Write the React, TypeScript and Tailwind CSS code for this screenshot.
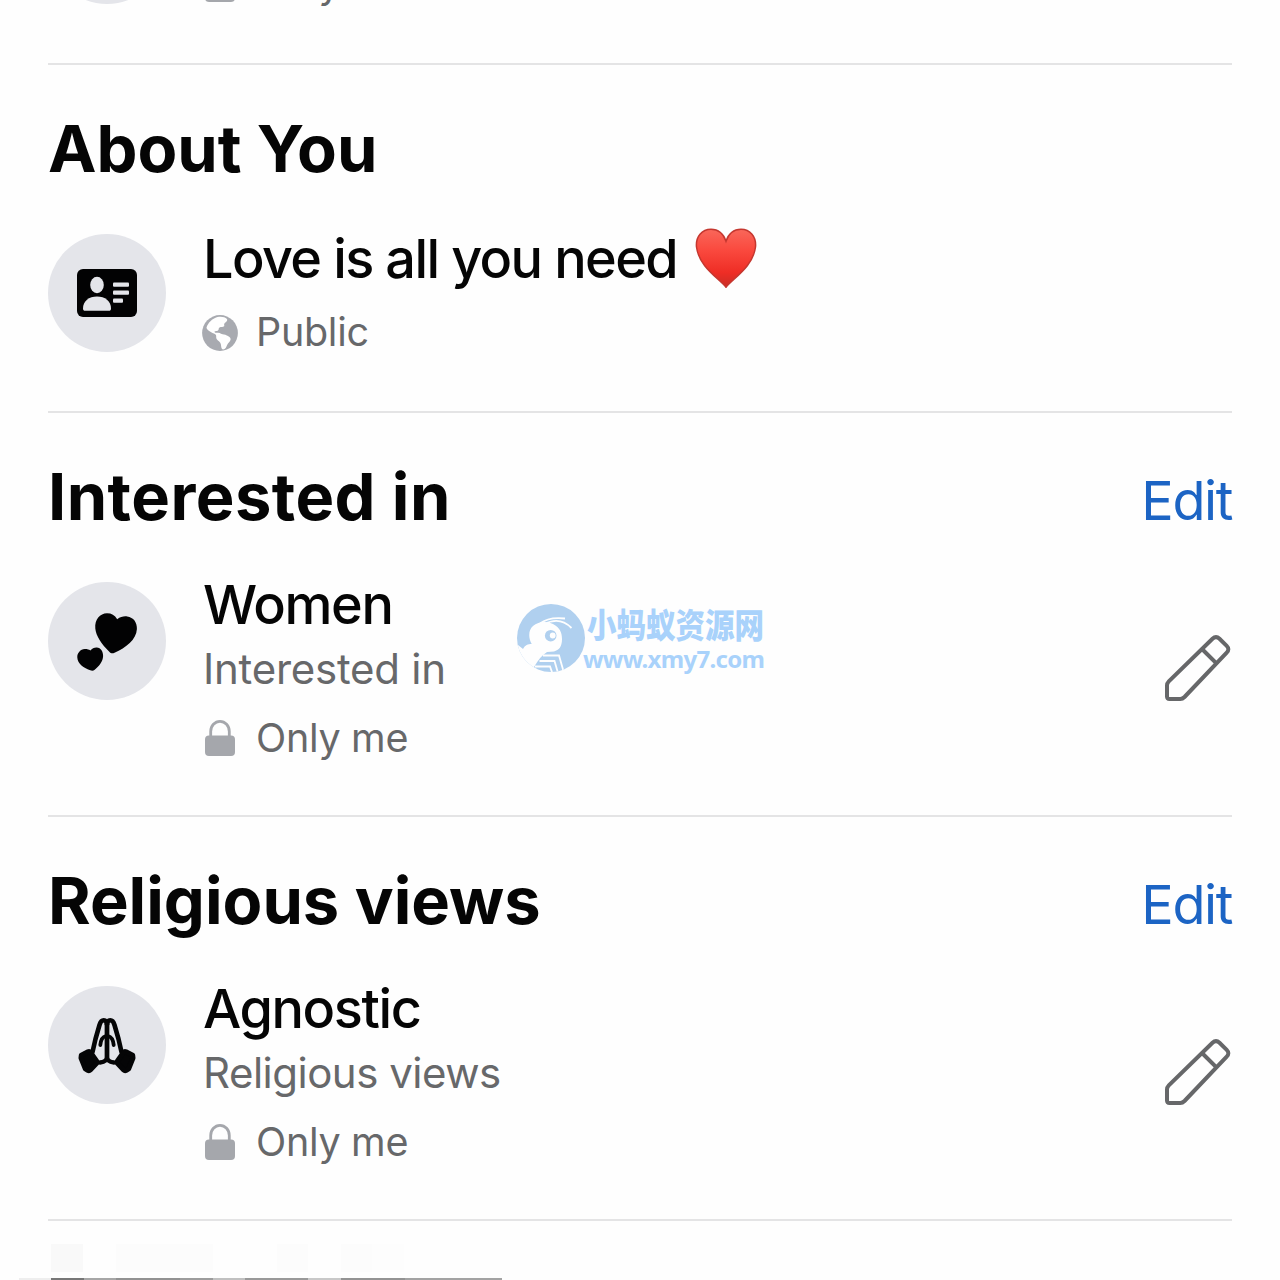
import type { ReactNode } from 'react';

function LockIcon() {
  return (
    <svg viewBox="0 0 36 40" className="w-9 h-10 shrink-0" fill="none">
      <path d="M8.7 19V13.500a9.300 10.200 0 0 1 18.600 0V19" stroke="#a5a7ac" strokeWidth="2.8" />
      <rect x="3" y="17.5" width="30" height="20.5" rx="4" fill="#a5a7ac" />
    </svg>
  );
}

function GlobeIcon() {
  return (
    <svg viewBox="0 0 36 36" className="mt-0.5 w-9 h-9 shrink-0">
      <circle cx="18" cy="18" r="17.9" fill="#a8aab0" />
      <g fill="#fff">
        <path d="M4.500 12.500C6 8 10 3.500 15.500 2c4-.8 7.500 0 9.500 2 .8 1.300-.5 2.700-2 3.700-1 .8-1 2-.6 3.400-1.500 1.600-3.500.4-4.900 1.500-1.400 1-.2 2-1.500 3-1.200.8-2.500.3-3.500 1 0 1.200 1 1.400 2.500 1.200 1.800-.3 3 .1 4 1 2.300 1 3.800.5 5.800 1.800 1.800 1 4 1.500 3.800 4-.3 2.500-2.500 3.300-3.500 5.500-.8 2-1.600 4.300-4 4.300-2 0-1.800-3-2.300-5.300-.5-2.500-3-3-4.200-5-.9-1.800.3-3.600-1.300-4.800-1.800-1.300-3.800-1.500-5.300-2.800-1.500-1.200-3.500-2-3.500-4z" />
      </g>
    </svg>
  );
}

function CardIcon() {
  return (
    <svg viewBox="0 0 60 48" className="w-[60px] h-12">
      <rect width="60" height="48" rx="6" fill="#020203" />
      <g fill="#e4e5ea">
        <ellipse cx="20" cy="16" rx="6.8" ry="8.2" />
        <path d="M6 39.5C6 32 12 27.5 20 27.5S34 32 34 39.500c0 1.600-.8 2.300-2.200 2.300H8.200C6.800 41.800 6 41.100 6 39.500z" />
        <rect x="36" y="13.5" width="16" height="4.2" rx="1" />
        <rect x="36" y="21.5" width="16" height="4.2" rx="1" />
        <rect x="36" y="29.5" width="10" height="4.2" rx="1" />
      </g>
    </svg>
  );
}

function HeartsIcon() {
  return (
    <svg viewBox="0 0 118 118" className="w-[118px] h-[118px]" fill="#020203">
      <path d="M66.500 70.800c-2 1-3.800.6-5.200-1C53.500 62 48 54 47.300 46.500 46.500 37.500 52 31.500 59 31.300c4.500 0 7.800 1.900 10.200 6 3.300-2.500 6.800-3.300 10-2.800 6.300.8 10 6 9.700 12.500-.6 11-11 18.500-22.400 23.800z" />
      <path d="M46.700 87.700c-1.300 1.200-2.800 1.300-4.400.6C35 85.700 29.700 81.500 29.300 75.500c-.3-4.500 3.200-8.300 7.400-8.500 2.300-.1 4.100.4 5.700 1.500 1.700-2 3.800-3.100 6.300-3 4.300.2 6.500 4.200 6.400 8.500-.2 5.500-3.900 10-8.400 13.700z" />
    </svg>
  );
}

function Hand() {
  return (
    <>
      <path d="M44.500 66L47.500 53l4-14c1-3.300 2.200-4.700 4.200-4.700s3.300 1.700 3.300 4.200" strokeWidth="4.6" />
      <path d="M59 37v34c0 3-2 5-7 5.500" strokeWidth="4.4" />
      <path d="M58 50c-3.500.8-5.200 3.500-5.700 9" strokeWidth="3.8" />
      <path d="M33.300 69.200L40 65.800c1-.5 1.700-.3 2.400.5L48.600 75c.6 1 .5 1.800-.2 2.600L42.300 84c-.8.8-1.600.9-2.600.3l-2.400-1.400L33 72z" fill="#050506" strokeWidth="5" />
    </>
  );
}

function PrayIcon() {
  return (
    <svg viewBox="0 0 118 118" className="w-[118px] h-[118px]" fill="none" stroke="#050506" strokeLinecap="round" strokeLinejoin="round">
      <Hand />
      <g transform="matrix(-1 0 0 1 118 0)">
        <Hand />
      </g>
    </svg>
  );
}

function PencilIcon() {
  return (
    <svg viewBox="0 0 68 68" className="w-[68px] h-[68px]" fill="none" stroke="#666769" strokeWidth="4" strokeLinejoin="round">
      <path d="M3 61.5V50.5c0-1.700.6-3 1.800-4.200L48.500 3.800c2.300-2.200 4.700-2.200 7 0l7.200 7.100c2.200 2.200 2.200 4.500 0 6.700L20.500 62c-1.200 1.200-2.500 2-4.200 2H5.500C3.700 64 3 63.200 3 61.500z" />
      <path d="M38.500 14.500l13.700 13.700" />
    </svg>
  );
}

function RedHeart() {
  return (
    <svg viewBox="0 0 62 60" className="w-[62px] h-[60px] shrink-0">
      <defs>
        <linearGradient id="heart" x1="0" y1="0" x2="0" y2="1">
          <stop offset="0" stopColor="#f9675a" />
          <stop offset="0.35" stopColor="#fa4a3f" />
          <stop offset="0.75" stopColor="#ee2d25" />
          <stop offset="1" stopColor="#c92d25" />
        </linearGradient>
      </defs>
      <path
        d="M31 59.300C25 51 4 39.500 1.500 19 .5 8.500 7 1.200 16 1.200c7.200 0 12.300 4 15 12 2.700-8 7.800-12 15-12 9 0 15.500 7.300 14.500 17.800C58 39.500 37 51 31 59.300z"
        fill="url(#heart)"
        stroke="#c5372f"
        strokeWidth="1.5"
      />
    </svg>
  );
}

function Avatar({ children }: { children?: ReactNode }) {
  return (
    <div className="mt-[5px] flex size-[118px] shrink-0 items-center justify-center rounded-full bg-[#e4e5ea]">
      {children}
    </div>
  );
}

function Privacy({ label }: { label: string }) {
  return (
    <div className="-ml-px flex h-[50px] items-center text-[39.5px] leading-[50px] tracking-[-0.3px] text-[#67686a]">
      {label === 'Public' ? <GlobeIcon /> : <LockIcon />}
      <span className="ml-[18px]">{label}</span>
    </div>
  );
}

function SectionHeader({ title, tracking, editable }: { title: string; tracking: string; editable?: boolean }) {
  return (
    <div className="flex h-[68px] items-center justify-between">
      <h2 className={`-mt-0.5 text-[65px] leading-[68px] font-bold whitespace-nowrap ${tracking}`}>{title}</h2>
      {editable && <a href="#" className="mt-1.5 text-[54px] leading-[68px] tracking-[-1.4px] text-[#1c64c4]">Edit</a>}
    </div>
  );
}

interface DetailProps {
  title: string;
  value: string;
  icon: ReactNode;
  titleTracking: string;
  valueTracking: string;
  subTracking: string;
}

function DetailSection({ title, value, icon, titleTracking, valueTracking, subTracking }: DetailProps) {
  return (
    <section className="h-[404px] border-t-2 border-[#e4e4e5] pt-[51px]">
      <SectionHeader title={title} tracking={titleTracking} editable />
      <div className="mt-[45px] flex">
        <Avatar>{icon}</Avatar>
        <div className="ml-[37px] grow">
          <p className={`text-[54px] leading-[56px] font-medium ${valueTracking}`}>{value}</p>
          <p className={`mt-[11px] text-[42px] leading-[50px] text-[#67686a] ${subTracking}`}>{title}</p>
          <div className="mt-[19px]"><Privacy label="Only me" /></div>
        </div>
        <div className="mt-[58px]"><PencilIcon /></div>
      </div>
    </section>
  );
}

function Watermark() {
  return (
    <div className="absolute top-[603px] left-[516px] flex text-[#a9d2fb]">
      <svg viewBox="0 0 70 70" className="w-[70px] h-[70px] shrink-0">
        <defs>
          <clipPath id="badge">
            <circle cx="35" cy="35" r="34" />
          </clipPath>
        </defs>
        <g clipPath="url(#badge)">
          <rect width="70" height="70" fill="#b0d0ef" />
          <path d="M0 41l2 1 5 4c2-4 5-5 8.700-5C12 34 12.500 27 17 23c5-4.500 14-5.500 20-2 7 3.500 9 9 9 15 0 8-3 11-8 12.500L31 49c-5 3-9 8-13 15l-4 6H0z" fill="#fefefe" />
          <path d="M24 20.500C31 15 40 14.500 49 15.500M28 21.500c9-5 19-5 27.500 3.500" stroke="#fefefe" strokeWidth="1.8" fill="none" />
          <path d="M27 52.500h16l5 17.500M23.500 58h15L42 70M19 63.500h15l2.500 7" stroke="#fefefe" strokeWidth="1.8" fill="none" />
          <circle cx="34.7" cy="32.7" r="5.8" fill="#b0d0ef" />
          <circle cx="36.7" cy="32.5" r="2.9" fill="#fefefe" />
        </g>
      </svg>
      <div className="-ml-[3px]">
        <p className="mt-0.5 mb-2 ml-1 h-8 origin-top scale-y-[1.15] font-['Noto_Sans_CJK_SC',sans-serif] text-[29.5px] leading-[33px] font-black whitespace-nowrap">小蚂蚁资源网</p>
        <p className="font-['Noto_Sans',sans-serif] text-[24px] leading-7 font-bold tracking-[-0.7px] whitespace-nowrap">www.xmy7.com</p>
      </div>
    </div>
  );
}

function NextSection() {
  return (
    <section className="border-t-2 border-[#e4e4e5] pt-[23px]">
      <div className="ml-[3px] flex h-7">
        <div className="w-8 bg-[#f9f9f9]" />
        <div className="ml-[33px] w-[97px] bg-[#fcfcfc]" />
        <div className="ml-16 w-[31px] bg-[#fcfcfc]" />
        <div className="ml-[33px] w-[31px] bg-[#fcfcfc]" />
        <div className="w-8 bg-[#fdfdfd]" />
      </div>
      <div className="mt-1.5 -ml-[29px] flex h-2">
        <div className="w-8 bg-[#eeeeee]" />
        <div className="w-[33px] bg-[#777777]" />
        <div className="w-8 bg-[#a6a6a6]" />
        <div className="w-16 bg-[#929292]" />
        <div className="w-[33px] bg-[#9c9c9c]" />
        <div className="w-8 bg-[#c0c0c0]" />
        <div className="w-[63px] bg-[#999999]" />
        <div className="w-[33px] bg-[#c8c8c8]" />
        <div className="w-16 bg-[#939393]" />
        <div className="w-[97px] bg-[#a3a3a3]" />
      </div>
    </section>
  );
}

export default function App() {
  return (
    <main className="relative h-[1280px] w-[1280px] overflow-hidden bg-[#fefefe] px-12 font-[Inter,sans-serif] text-[#050505]">
      <div className="flex h-[63px] items-start overflow-hidden">
        <div className="-mt-[119px]"><Avatar /></div>
        <div className="-mt-[41px] ml-[37px]"><Privacy label="Only me" /></div>
      </div>

      <section className="h-[348px] border-t-2 border-[#e4e4e5] pt-[51px]">
        <SectionHeader title="About You" tracking="tracking-[-0.05px]" />
        <div className="mt-[45px] flex">
          <Avatar><CardIcon /></Avatar>
          <div className="ml-[37px]">
            <div className="flex h-[60px] items-center">
              <p className="text-[54px] leading-[60px] font-medium tracking-[-1.62px] whitespace-nowrap">Love is all you need</p>
              <div className="-mt-0.5 ml-[18px]"><RedHeart /></div>
            </div>
            <div className="mt-[18px]"><Privacy label="Public" /></div>
          </div>
        </div>
      </section>

      <DetailSection
        title="Interested in"
        value="Women"
        icon={<HeartsIcon />}
        titleTracking="tracking-[0.45px]"
        valueTracking="tracking-[-1.3px]"
        subTracking="tracking-[-0.25px]"
      />
      <DetailSection
        title="Religious views"
        value="Agnostic"
        icon={<PrayIcon />}
        titleTracking="tracking-[0px]"
        valueTracking="tracking-[-1.4px]"
        subTracking="tracking-[-0.5px]"
      />
      <NextSection />
      <Watermark />
    </main>
  );
}
